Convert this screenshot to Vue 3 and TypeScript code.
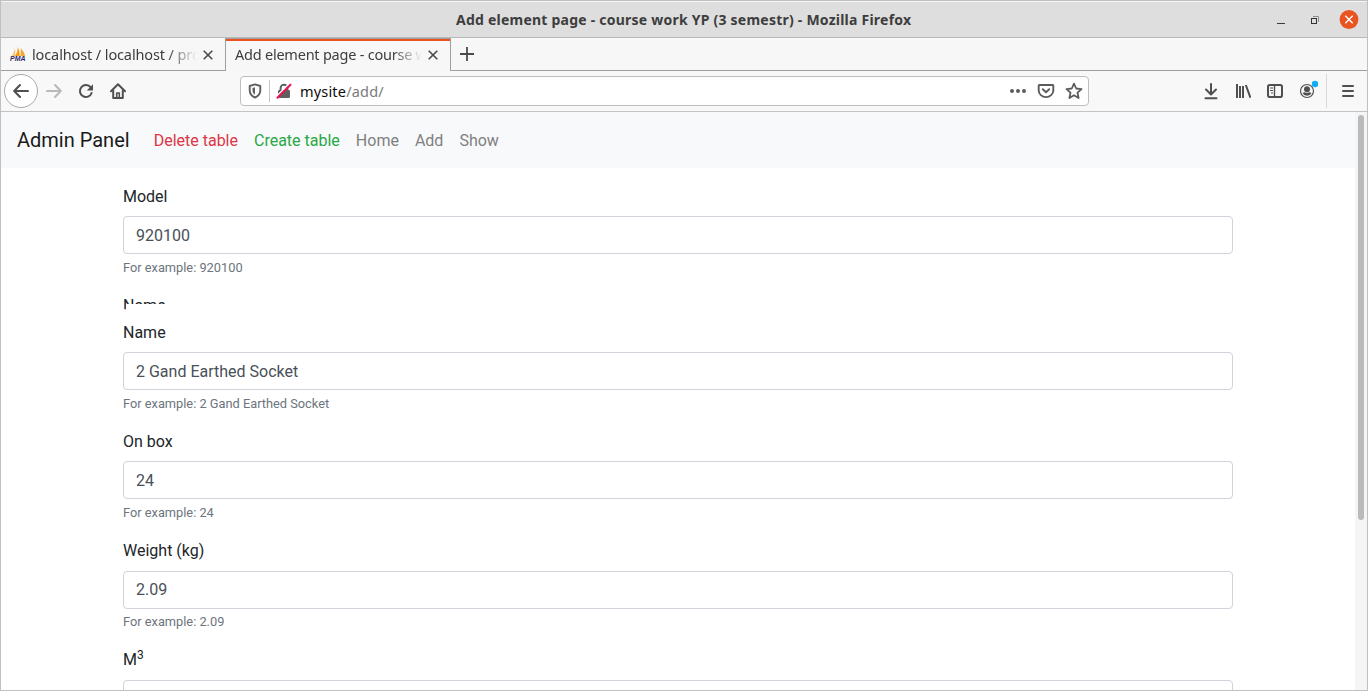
<script setup lang="ts">
interface NavLink {
  label: string
  tone: string
}
interface Field {
  id: string
  label: string
  sup?: string
  value: string
}

const links: NavLink[] = [
  { label: 'Delete table', tone: 'danger' },
  { label: 'Create table', tone: 'success' },
  { label: 'Home', tone: 'muted' },
  { label: 'Add', tone: 'muted' },
  { label: 'Show', tone: 'muted' },
]

const modelField: Field = { id: 'model', label: 'Model', value: '920100' }
const fields: Field[] = [
  { id: 'name', label: 'Name', value: '2 Gand Earthed Socket' },
  { id: 'box', label: 'On box', value: '24' },
  { id: 'weight', label: 'Weight (kg)', value: '2.09' },
  { id: 'volume', label: 'M', sup: '3', value: '' },
]
</script>

<template>
  <div class="window">
    <header class="titlebar">
      <span class="title">Add element page - course work YP (3 semestr) - Mozilla Firefox</span>
      <div class="controls">
        <svg width="10" height="16" viewBox="0 0 10 16"><path d="M1 11.5h8" stroke="#3a3a3a" /></svg>
        <svg class="restore" width="10" height="10" viewBox="0 0 10 10" fill="none">
          <path d="M3 1.5h5.5V7" stroke="#8d8d8d" />
          <rect x="1.5" y="3.5" width="5" height="5" stroke="#333" />
        </svg>
        <svg width="20" height="20" viewBox="0 0 20 20">
          <circle cx="10" cy="9.5" r="9.4" fill="#e95420" />
          <path d="M6.3 5.8l7.4 7.4M13.7 5.8l-7.4 7.4" stroke="#fff" stroke-width="1.4" />
        </svg>
      </div>
    </header>

    <div class="tabs">
      <div class="tab first">
        <svg class="favicon" width="16" height="16" viewBox="0 0 16 16">
          <path d="M0.8 11Q4 8 4.7 2.2Q6 6 4.8 10z" fill="#f7c27a" />
          <path d="M4.8 10Q8 6 7.8 1Q10 5 9.8 10z" fill="#f89c0e" />
          <path d="M10.4 10L11 2.2Q14.5 6 15.4 10.4z" fill="#f9a93a" />
          <text x="0" y="15.4" class="pma" textLength="15.5" lengthAdjust="spacingAndGlyphs">PMA</text>
        </svg>
        <span class="tab-label one">localhost / localhost / pro</span>
        <svg class="close low" width="12" height="12" viewBox="0 0 12 12"><path d="M1.7 1.7l8.6 8.6M10.3 1.7l-8.6 8.6" stroke="#4a4a4a" stroke-width="1.6" /></svg>
      </div>
      <div class="tab active">
        <span class="tab-label two">Add element page - course w</span>
        <svg class="close low" width="12" height="12" viewBox="0 0 12 12"><path d="M1.7 1.7l8.6 8.6M10.3 1.7l-8.6 8.6" stroke="#4a4a4a" stroke-width="1.6" /></svg>
      </div>
      <div class="tab-rest">
        <svg width="16" height="16" viewBox="0 0 16 16"><path d="M8 1v14M1 8h14" stroke="#4a4a4a" stroke-width="1.8" /></svg>
      </div>
    </div>

    <div class="toolbar">
      <div class="back">
        <svg width="16" height="16" viewBox="0 0 16 16" fill="none" stroke="#4f4f4f" stroke-width="2" stroke-linecap="round" stroke-linejoin="round"><path d="M15 8H1.5M7 2L1.2 8L7 14" /></svg>
      </div>
      <svg class="forward" width="16" height="16" viewBox="0 0 16 16" fill="none" stroke="#b9b9b9" stroke-width="2" stroke-linecap="round" stroke-linejoin="round"><path d="M1 8h13.5M9 2l5.8 6L9 14" /></svg>
      <svg class="reload" width="16" height="16" viewBox="0 0 16 16">
        <path d="M12.7 4.4A6 6 0 1 0 13.6 10" fill="none" stroke="#505050" stroke-width="2" stroke-linecap="round" />
        <path d="M15 1.2V7.5H8.8z" fill="#505050" />
      </svg>
      <svg class="home" width="16" height="16" viewBox="0 0 16 16" fill="none" stroke="#505050" stroke-linecap="round" stroke-linejoin="round">
        <path d="M1 8.2L8 1.2l7 7" stroke-width="2" />
        <path d="M3.2 7.5V15h9.6V7.5" stroke-width="2" />
        <path d="M6.7 15v-5h2.6v5" stroke-width="1.6" />
      </svg>
      <div class="urlbar">
        <svg class="shield" width="14" height="16" viewBox="0 0 14 16">
          <path d="M7 1.4L12.3 3v4.2c0 3.5-2.2 6-5.3 7.3C3.9 13.2 1.7 10.7 1.7 7.2V3z" fill="none" stroke="#606060" stroke-width="1.9" stroke-linejoin="round" />
          <path d="M7 4.2v7.6C5.2 10.6 4.5 9.2 4.5 7.3V4.9z" fill="#606060" />
        </svg>
        <span class="bar"></span>
        <svg class="lock" width="16" height="16" viewBox="0 0 16 16">
          <path d="M4.6 7.5V5.2a3.4 3.4 0 0 1 6.8 0v2.3" fill="none" stroke="#606060" stroke-width="2" />
          <rect x="2" y="7" width="12" height="8" rx="1.3" fill="#606060" />
          <path d="M0.7 13.2L13.2 0.7" stroke="#fff" stroke-width="1.6" />
          <path d="M1.5 14.7L14.5 1.7" stroke="#ed1250" stroke-width="2" stroke-linecap="round" />
        </svg>
        <span class="url"><b>mysite</b>/add/</span>
        <svg class="dots" width="18" height="16" viewBox="0 0 18 16" fill="#5c5c5c"><circle cx="3" cy="8" r="2" /><circle cx="9" cy="8" r="2" /><circle cx="15" cy="8" r="2" /></svg>
        <svg class="pocket" width="18" height="16" viewBox="0 0 18 16" fill="none" stroke="#5c5c5c" stroke-width="1.9" stroke-linecap="round" stroke-linejoin="round">
          <path d="M2.3 2h13.4q.6 0 .6.6V7.5a7.3 6.6 0 0 1-14.6 0V2.6q0-.6.6-.6z" />
          <path d="M5.8 6.2L9 9.2l3.2-3" />
        </svg>
        <svg class="star" width="18" height="18" viewBox="0 0 18 18" fill="none" stroke="#5c5c5c" stroke-width="1.8" stroke-linejoin="round"><path d="M9 1.6l2.2 4.9 5.3.6-4 3.6 1.1 5.3L9 13.3 4.4 16l1.1-5.3-4-3.6 5.3-.6z" /></svg>
      </div>
      <div class="tools">
        <svg width="16" height="18" viewBox="0 0 16 18" fill="none" stroke="#505050" stroke-width="2" stroke-linecap="round" stroke-linejoin="round"><path d="M8 2v10M3 7.5l5 5 5-5M2.5 16.2h11" /></svg>
        <svg width="16" height="16" viewBox="0 0 16 16" fill="none" stroke="#505050" stroke-width="2"><path d="M2 1v14M5 3v12M8 3v12M10.8 2l4.6 12.6" /></svg>
        <svg width="16" height="16" viewBox="0 0 16 16" fill="none" stroke="#505050">
          <rect x="1" y="2" width="14" height="12" rx="1.8" stroke-width="2" />
          <path d="M7.5 2v12" stroke-width="1.4" /><path d="M3 5h3M3 7.5h3M4 10h2" />
        </svg>
        <svg class="account" width="20" height="20" viewBox="0 0 20 20">
          <circle cx="8" cy="11" r="6.5" fill="none" stroke="#505050" stroke-width="1.2" />
          <circle cx="8" cy="9.3" r="3" fill="#505050" />
          <path d="M3.5 13Q5.5 12 6 12.2Q8 13.8 10 12.2Q11 12 12.5 13A5 5 0 0 1 3.5 13z" fill="#505050" />
          <circle cx="16" cy="4" r="3.2" fill="#10adf5" />
        </svg>
      </div>
      <span class="separator"></span>
      <svg class="menu" width="14" height="14" viewBox="0 0 14 14" stroke="#505050" stroke-width="2" stroke-linecap="round"><path d="M2 2h10M2 7h10M2 12h10" /></svg>
    </div>

    <div class="viewport">
      <div class="page">
        <nav class="navbar">
          <span class="brand">Admin Panel</span>
          <a v-for="link in links" :key="link.label" class="link" :class="link.tone">{{ link.label }}</a>
        </nav>
        <form class="container" @submit.prevent>
          <div class="group">
            <label :for="modelField.id">{{ modelField.label }}</label>
            <input :id="modelField.id" class="control" :value="modelField.value" />
            <small>For example: {{ modelField.value }}</small>
          </div>
          <div class="slice">Name</div>
          <div v-for="field in fields" :key="field.id" class="group">
            <label :for="field.id">{{ field.label }}<sup v-if="field.sup">{{ field.sup }}</sup></label>
            <input :id="field.id" class="control" :value="field.value" />
            <small v-if="field.value">For example: {{ field.value }}</small>
          </div>
        </form>
      </div>
      <div class="scrollbar"><div class="thumb"></div></div>
    </div>
  </div>
</template>

<style>
body {
  margin: 0;
  overflow: hidden;
}
</style>

<style scoped>
* {
  box-sizing: border-box;
}
svg {
  display: block;
  flex: none;
}
.window {
  width: 1368px;
  height: 691px;
  border: 1px solid #c0c0c0;
  display: flex;
  flex-direction: column;
  overflow: hidden;
  background: #fff;
  font-family: "Noto Sans", "Open Sans", sans-serif;
}
.titlebar {
  flex: none;
  height: 37px;
  border-top: 1px solid #f5f5f5;
  border-bottom: 1px solid #b8b8b8;
  background: #dedede;
  display: grid;
  grid-template-columns: 455px 1fr auto;
  align-items: center;
}
.title {
  grid-column: 2;
  font-size: 14px;
  font-weight: 700;
  line-height: 20px;
  letter-spacing: 0.23px;
  color: #3d3d3d;
  white-space: nowrap;
}
.controls {
  display: flex;
  align-items: center;
  gap: 24px;
  padding-right: 8px;
}
.restore {
  margin-right: -5px;
}
.tabs {
  flex: none;
  height: 33px;
  display: flex;
  background: #f7f7f7;
}
.tab {
  display: flex;
  align-items: center;
  border-bottom: 1px solid #9f9f9f;
  width: 224px;
  padding-left: 9px;
}
.tab.active {
  width: 226px;
  border: 1px solid #9f9f9f;
  border-width: 0 1px;
  padding: 0 0 1px 9px;
  box-shadow: inset 0 1px #9f9f9f, inset 0 3px #e95420;
}
.tab-label {
  font-size: 14.5px;
  line-height: 20px;
  color: #3d3d3d;
  white-space: nowrap;
  overflow: hidden;
  -webkit-mask-image: linear-gradient(to right, #000 calc(100% - 30px), transparent);
  mask-image: linear-gradient(to right, #000 calc(100% - 30px), transparent);
}
.one {
  width: 165px;
  margin-left: 6px;
  letter-spacing: -0.12px;
}
.two {
  width: 187px;
  letter-spacing: -0.23px;
}
.close {
  margin-left: 5px;
}
.close.low {
  margin-top: 1px;
}
.pma {
  font: italic 700 6.5px "Liberation Sans", sans-serif;
  fill: #302b6b;
}
.tab-rest {
  flex: 1;
  border-bottom: 1px solid #9f9f9f;
  display: flex;
  align-items: center;
  padding-left: 8px;
}
.toolbar {
  flex: none;
  height: 41px;
  background: #f8f8f8;
  border-bottom: 1px solid #c4c4c4;
  display: flex;
  align-items: center;
  padding-left: 3px;
}
.back {
  width: 34px;
  height: 34px;
  border: 1px solid #a9a9a9;
  border-radius: 50%;
  background: #fff;
  display: grid;
  place-items: center;
}
.forward {
  margin-left: 8px;
}
.reload,
.home {
  margin-left: 16px;
}
.urlbar {
  margin-left: 114px;
  width: 849px;
  height: 30px;
  border: 1px solid #bebebe;
  border-radius: 4px;
  background: #fff;
  display: flex;
  align-items: center;
  padding-left: 7px;
}
.bar {
  width: 1px;
  height: 22px;
  background: #c4c4c4;
  margin: 0 6px 0 7px;
}
.url {
  margin-left: 8px;
  flex: 1;
  font-size: 14.5px;
  line-height: 20px;
  letter-spacing: 0.18px;
  color: #7b7b7b;
}
.url b {
  font-weight: 400;
  color: #0c0c0c;
}
.pocket {
  margin-left: 10px;
}
.star {
  margin: 0 5px 0 10px;
}
.tools {
  margin-left: 114px;
  display: flex;
  align-items: center;
  gap: 16px;
}
.account {
  margin: -2px 0 0;
}
.separator {
  width: 1px;
  height: 34px;
  background: #d9d9d9;
  margin-left: 7px;
}
.menu {
  margin-left: 14px;
}
.viewport {
  flex: 1;
  min-height: 0;
  display: flex;
  overflow: hidden;
}
.page {
  flex: 1;
  font-family: Roboto, sans-serif;
  font-size: 16px;
  line-height: 24px;
  color: #212529;
}
.navbar {
  height: 56px;
  background: #f8f9fa;
  display: flex;
  align-items: center;
  padding: 0 16px;
}
.brand {
  font-size: 20px;
  line-height: 30px;
  color: #1a1a1a;
  margin-right: 16px;
}
.link {
  padding: 2px 8px 0;
}
.danger {
  color: #dc3545;
}
.success {
  color: #28a745;
}
.muted {
  color: #808080;
}
.container {
  width: 1110px;
  margin: 0 auto;
  padding-top: 16px;
}
.group {
  margin-bottom: 16.125px;
}
label {
  display: block;
  padding-top: 0.5625px;
  margin-bottom: 7.4375px;
}
sup {
  position: relative;
  top: -0.5em;
  font-size: 75%;
  line-height: 0;
  vertical-align: baseline;
}
.control {
  display: block;
  width: 100%;
  height: 38px;
  padding: 6px 12px;
  border: 1px solid #ced4da;
  border-radius: 4px;
  background: #fff;
  font: inherit;
  color: #495057;
  outline: none;
}
small {
  display: block;
  margin-top: 3.875px;
  font-size: 12.8px;
  line-height: 19.2px;
  color: #6c757d;
}
.slice {
  height: 26.95px;
  padding-top: 0.8px;
  clip-path: polygon(0 0, 100% 0, 100% 10.8px, 3px 10.8px, 3px 16px, 0 16px);
}
.scrollbar {
  width: 12px;
  background: #f5f5f5;
  padding: 3px 3px 0;
}
.thumb {
  width: 6px;
  height: 405px;
  border-radius: 3px;
  background: #bababa;
}
</style>
